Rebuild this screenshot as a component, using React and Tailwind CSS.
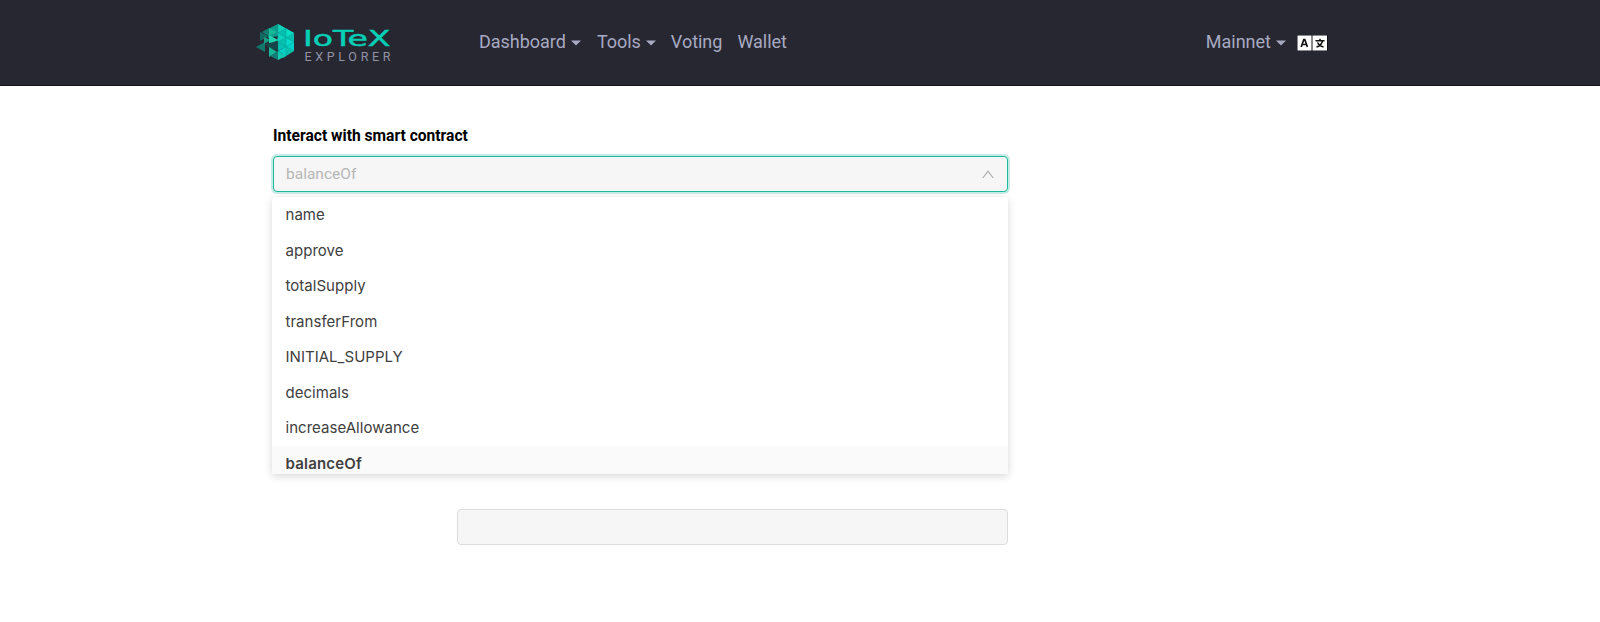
import React from "react";

const options = ["name", "approve", "totalSupply", "transferFrom", "INITIAL_SUPPLY", "decimals", "increaseAllowance", "balanceOf"];

function Caret() {
  return (
    <svg className="ml-[5px] mt-[2px] h-[6px] w-[10px]" viewBox="0 0 10 6">
      <path d="M0 .5H10L5 5.5Z" fill="#a7aac2" />
    </svg>
  );
}

function Mark() {
  return (
    <svg className="h-9 w-[38px] shrink-0" viewBox="0 0 38 36">
      <path d="M22 0 38 9V27L27 34V24L20 20 22 12Z" fill="#06bfae" />
      <path d="M22 0 12 5V14L22 12Z" fill="#0b9c8c" />
      <path d="M22 0 30 4.500 22 9Z" fill="#0ed2b8" />
      <path d="M30 4.500 38 9 30 14Z" fill="#08e0c6" />
      <path d="M22 9 30 14 22 18Z" fill="#0bd3bd" />
      <path d="M30 14 38 18 30 23Z" fill="#06dccd" />
      <path d="M38 18V27L30 23Z" fill="#03d1cb" />
      <path d="M22 18 30 23 22 27Z" fill="#0abfb4" />
      <path d="M30 23V32L22 27Z" fill="#03cec6" />
      <path d="M22 0V27M30 4.500V32M22 9 38 18M22 18 38 27M38 9 22 18M38 18 22 27M30 4.500 22 9" stroke="#0a9f94" strokeWidth=".5" fill="none" />
      <path d="M4 8 13 12 4 17Z" fill="#126b63" />
      <path d="M13 4V12L6 8Z" fill="#127d70" />
      <path d="M13 4 21 8 13 12Z" fill="#17b997" />
      <path d="M0 23 9 18V28Z" fill="#12786c" />
      <path d="M8 13 15 16 8 20Z" fill="#169b82" />
      <path d="M13 11 22 16 13 21Z" fill="#20d3ae" />
      <path d="M9 20 22 17V27L13 24Z" fill="#17464a" />
      <path d="M13 23 21 28 13 33Z" fill="#15b79b" />
      <path d="M22 27V36L14 32Z" fill="#127d72" />
      <path d="M22 27 30 32 22 36Z" fill="#12c8b2" />
    </svg>
  );
}

function Logo() {
  return (
    <div className="flex items-start pt-6">
      <Mark />
      <svg className="ml-[10px] mt-[3px] h-[36px] w-[88px]" viewBox="0 0 88 36">
        <text className="font-['DejaVu_Sans',sans-serif]" x="-1" y="19" fontSize="21.500" stroke="#06cfb6" strokeWidth=".5" fill="#06cfb6" textLength="87.500" lengthAdjust="spacingAndGlyphs">IoTeX</text>
        <text className="font-['Roboto',sans-serif]" x="0.500" y="33.500" fontSize="12.500" fill="#9193a5" textLength="86">EXPLORER</text>
      </svg>
    </div>
  );
}

function Header() {
  return (
    <header className="h-[86px] border-b border-[#15141d] bg-[#272732] pl-[256px] pr-[272px]">
      <div className="flex text-[18px] leading-[27px] text-[#a7aac2]">
        <div className="w-[223px]"><Logo /></div>
        <nav className="flex items-start gap-4 pt-7 tracking-[-0.02px]">
          <a className="flex items-center">Dashboard<Caret /></a>
          <a className="flex items-center">Tools<Caret /></a>
          <a className="-ml-px">Voting</a>
          <a className="-ml-px">Wallet</a>
        </nav>
        <div className="ml-auto flex items-center self-start pt-7">
          Mainnet<Caret />
          <svg className="ml-[11px] mt-[2px] h-4 w-[31px]" viewBox="0 0 31 16">
            <rect width="31" height="16" rx="1" fill="#11111a" />
            <rect x=".5" y=".5" width="14" height="15" fill="#fff" />
            <rect x="15.500" y=".5" width="14.500" height="15" fill="#fff" />
            <path d="M4.200 12 6.800 4.500H7.800L10.400 12M5 9.500H9.600" fill="none" stroke="#111" strokeWidth="1.700" />
            <path d="M18.500 5.700H27.500M23 3.800V5.700M20.500 7.500C21.500 9.500 23.500 11.300 26.500 12M25.500 6C24.500 9.500 22.500 11.300 19.500 12" fill="none" stroke="#111" strokeWidth="1.500" />
          </svg>
        </div>
      </div>
    </header>
  );
}

export default function App() {
  return (
    <div className="h-[622px] overflow-hidden bg-white font-['Roboto',sans-serif]">
      <Header />
      <main className="ml-[272px] w-[736px] pt-[38px]">
        <h1 className="pl-px text-[15.6px] font-bold leading-6 text-black">Interact with smart contract</h1>
        <div className="relative ml-px mt-2 flex h-9 items-center justify-between rounded-[4px] border border-[#1cb99c] bg-[#f6f6f6] pl-3 pr-[13px] text-[15.5px] text-[#b6b6b6] shadow-[0_0_0_2px_#c6ebe4]">
          <span className="pt-px">balanceOf</span>
          <svg className="h-[9px] w-3" viewBox="0 0 12 9"><path d="M.8 8 6 1.200 11.200 8" fill="none" stroke="#adadad" strokeWidth="1.200" /></svg>
        </div>
        <ul className="mt-[5px] h-[277px] overflow-hidden rounded-t-[4px] bg-white font-['Inter',sans-serif] text-[15px] tracking-[0.03px] text-[#404040] shadow-[0_2px_9px_rgba(0,0,0,0.16)]">
          {options.map((o) => (
            <li key={o} className="flex h-[35.5px] items-center pl-[13.5px] pt-[1.5px] last:bg-[#fafafa] last:font-semibold last:tracking-[0.2px]">{o}</li>
          ))}
        </ul>
        <div className="ml-[185px] mt-[35px] h-9 rounded-[4px] border border-[#dcdcdc] bg-[#f6f6f6]" />
      </main>
    </div>
  );
}
